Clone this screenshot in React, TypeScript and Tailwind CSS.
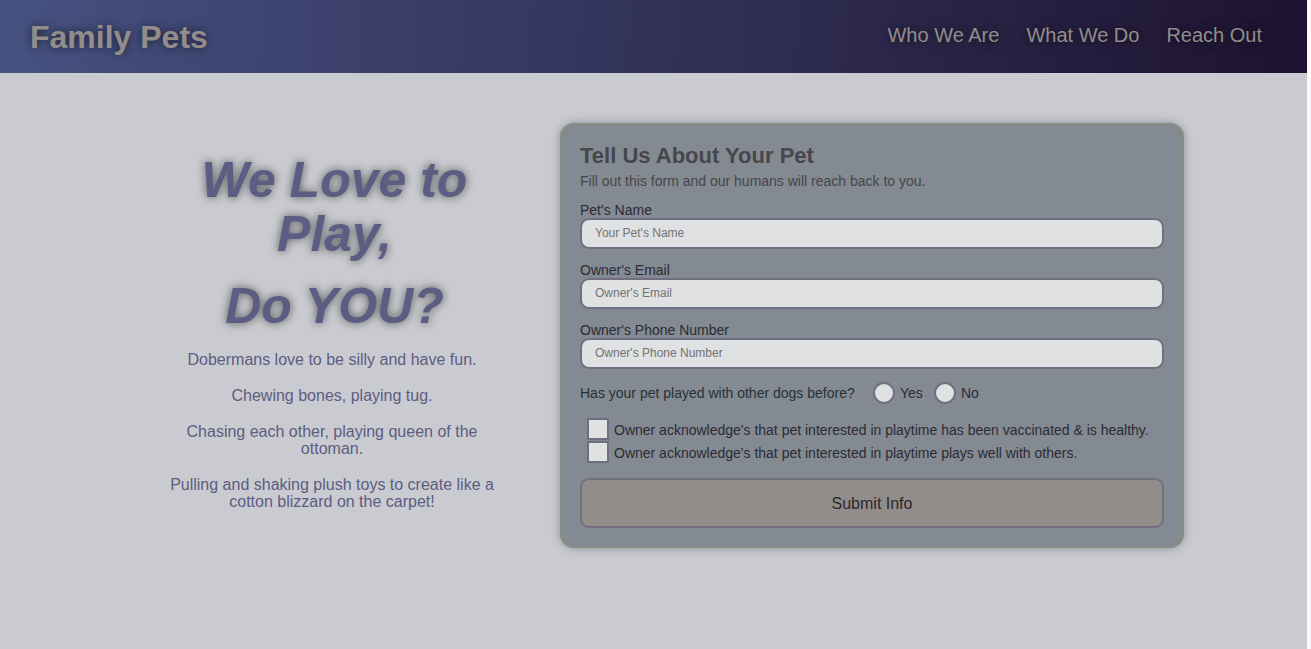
import React from "react";

const links = ["Who We Are", "What We Do", "Reach Out"];

const fields = [
  { id: "pet-name", label: "Pet's Name", placeholder: "Your Pet's Name", type: "text" },
  { id: "email", label: "Owner's Email", placeholder: "Owner's Email", type: "email" },
  { id: "phone", label: "Owner's Phone Number", placeholder: "Owner's Phone Number", type: "tel" },
];

const facts = [
  "Dobermans love to be silly and have fun.",
  "Chewing bones, playing tug.",
  "Chasing each other, playing queen of the ottoman.",
  "Pulling and shaking plush toys to create like a cotton blizzard on the carpet!",
];

const acknowledgements = [
  "Owner acknowledge's that pet interested in playtime has been vaccinated & is healthy.",
  "Owner acknowledge's that pet interested in playtime plays well with others.",
];

function Header() {
  return (
    <header className="flex min-h-[73px] flex-wrap items-center justify-between bg-[linear-gradient(95deg,#465281,#1e1330)] pr-[45px] pl-[30px] text-[#928d8b]">
      <h1 className="text-[32px] leading-9 font-bold [text-shadow:0_0_10px_rgba(0,0,0,0.6)]">Family Pets</h1>
      <nav className="flex flex-wrap gap-[27px] pb-1 text-[20px] leading-6 [text-shadow:0_0_10px_rgba(0,0,0,0.6)]">
        {links.map((link) => (
          <a key={link} href="#">{link}</a>
        ))}
      </nav>
    </header>
  );
}

function Intro() {
  return (
    <section className="w-full max-w-[352px] pt-[30px] text-center text-[#5d5c82]">
      <div className="flex flex-col gap-[18px] pl-[5px] text-[50px] leading-[54px] font-bold italic [text-shadow:0_0_10px_rgba(0,0,0,0.6)]">
        <h2>We Love to Play,</h2>
        <h2>Do YOU?</h2>
      </div>
      <div className="mt-[18px] flex flex-col gap-[19px] px-2 text-[16px] leading-[17px]">
        {facts.map((fact) => (
          <p key={fact}>{fact}</p>
        ))}
      </div>
    </section>
  );
}

function PetForm() {
  return (
    <form className="w-full max-w-[624px] rounded-[14px] border-2 border-[#848e84] bg-[#838a91] p-[18px] text-[14px] leading-4 text-[#2c2a36] shadow-[0_0_10px_rgba(0,0,0,0.3)]">
      <h2 className="text-[22px] leading-[26px] font-bold text-[#47464b]">Tell Us About Your Pet</h2>
      <p className="mt-1 text-[#47464b]">Fill out this form and our humans will reach back to you.</p>
      {fields.map((field) => (
        <div key={field.id} className="mt-[13px] flex flex-col">
          <label htmlFor={field.id}>{field.label}</label>
          <input
            id={field.id}
            type={field.type}
            placeholder={field.placeholder}
            className="h-[31px] w-full rounded-[9px] border-2 border-[#706f82] bg-[#e0e1e3] px-[13px] pb-[2px] text-[12px] placeholder:text-[#737374]"
          />
        </div>
      ))}
      <fieldset className="mt-[13px]">
        <div className="flex items-center">
          <legend className="min-w-[293px] text-[#273238]">Has your pet played with other dogs before?</legend>
          {["Yes", "No"].map((answer) => (
            <label key={answer} className="flex min-w-[61px] items-center gap-[5px]">
              <input type="radio" name="played" value={answer} className="size-[22px] appearance-none rounded-full border-2 border-[#706f82] bg-[#e0e1e3] checked:bg-[#5d5c82]" />
              {answer}
            </label>
          ))}
        </div>
      </fieldset>
      <div className="mt-[14px] flex flex-col gap-px pl-[7px]">
        {acknowledgements.map((text) => (
          <label key={text} className="flex items-center gap-[5px]">
            <input type="checkbox" className="size-[22px] shrink-0 appearance-none border-2 border-[#706f82] bg-[#e0e1e3] checked:bg-[#5d5c82]" />
            <span className="pt-[2px]">{text}</span>
          </label>
        ))}
      </div>
      <button type="submit" className="mt-[15px] h-[50px] w-full rounded-[9px] border-2 border-[#706f82] bg-[#928d8b] pt-[2px] text-[16px] text-[#292929]">
        Submit Info
      </button>
    </form>
  );
}

export default function App() {
  return (
    <div className="min-h-screen bg-[#fafafa] pr-1 font-['Liberation_Sans',Arial,sans-serif]">
      <div className="min-h-screen bg-[#cacbd0]">
        <Header />
        <main className="flex flex-wrap items-start justify-center gap-[52px] pt-[50px] pb-10 pl-[33px]">
          <Intro />
          <PetForm />
        </main>
      </div>
    </div>
  );
}
